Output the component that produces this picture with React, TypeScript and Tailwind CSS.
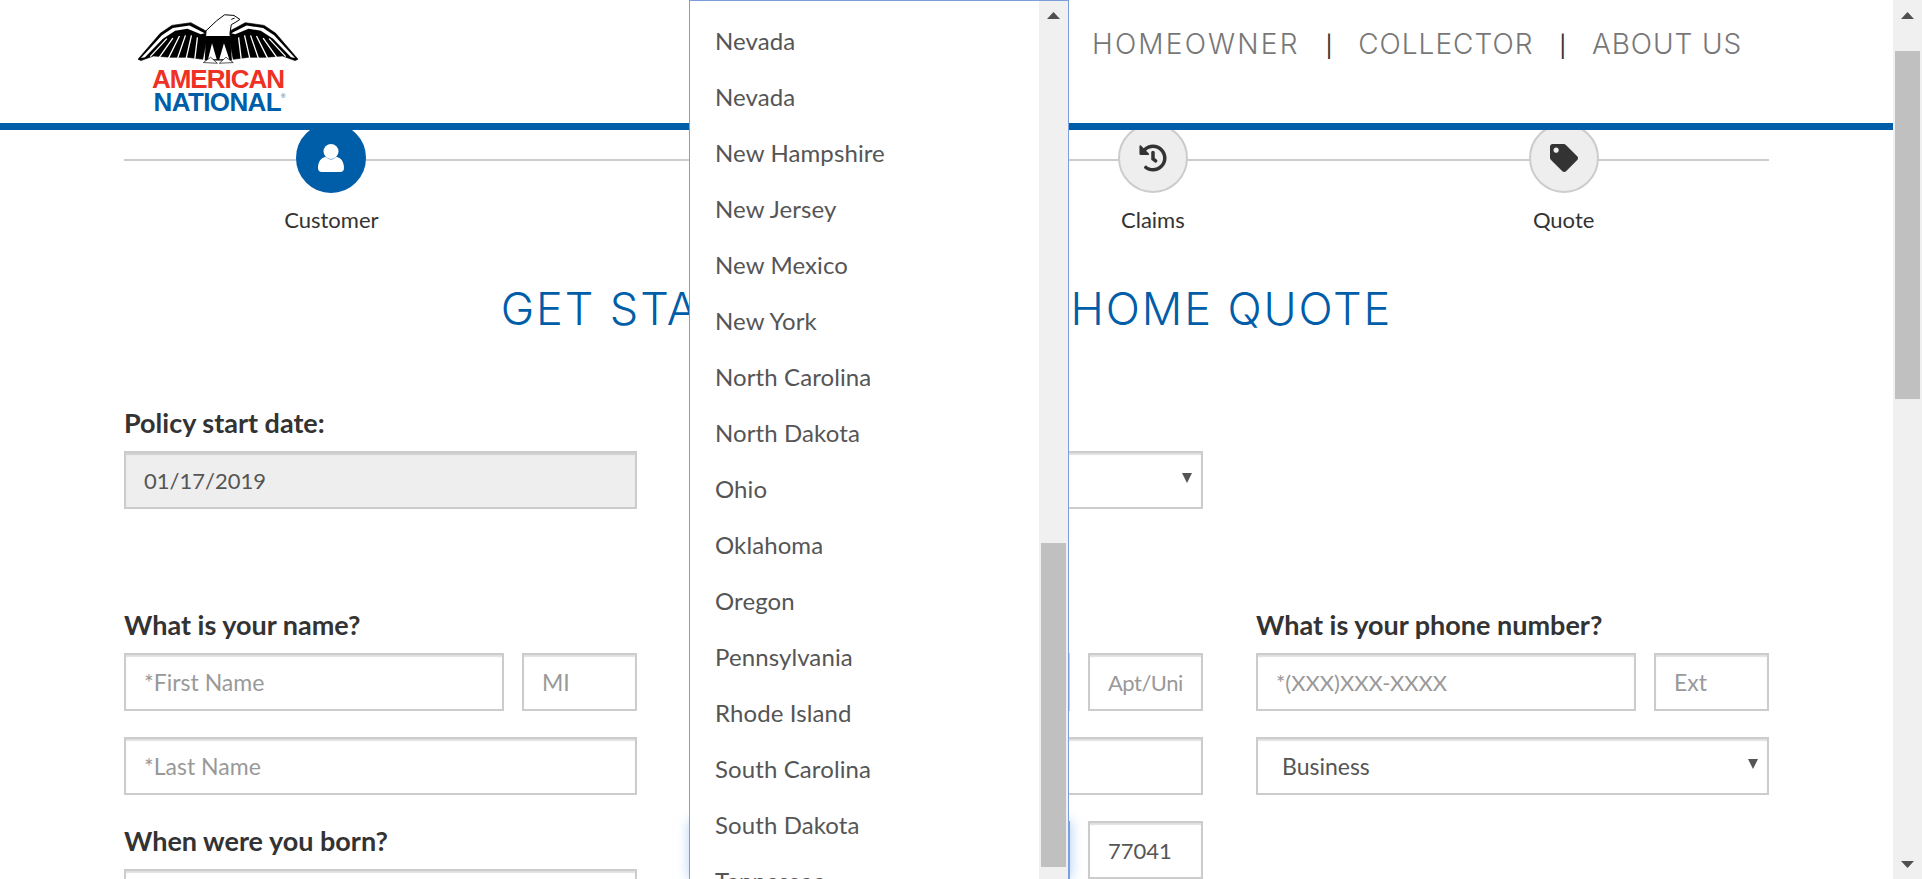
import React from 'react';
import { FaHistory, FaTag, FaHome } from 'react-icons/fa';

const STATES = [
  'Nevada', 'Nevada', 'New Hampshire', 'New Jersey', 'New Mexico', 'New York', 'North Carolina', 'North Dakota',
  'Ohio', 'Oklahoma', 'Oregon', 'Pennsylvania', 'Rhode Island', 'South Carolina', 'South Dakota', 'Tennessee',
];

const BODY_FONT = "font-['Lato',sans-serif]";
const BOX = 'h-[58px] border-2 border-[#ccc] bg-white shadow-[inset_0_2px_1px_rgba(0,0,0,0.12)]';
const INPUT = `${BOX} min-w-0 px-[18px] text-[#555] outline-none placeholder:text-[#999] ${BODY_FONT}`;
const LABEL = 'h-8 text-[27px] leading-8 font-bold text-[#333] mb-[12px]';

const Wing = ({ mirror }: { mirror?: boolean }) => (
  <g transform={mirror ? 'translate(708 0) scale(-1 1)' : undefined}>
    <path d="M113 178 L180 100 L215 76 L272 68 L322 95 L318 130 L308 178 L262 172 L210 172 L160 168 L122 182 Z" fill="#000" stroke="#000" strokeWidth="2" />
    <path d="M122 174 L185 106 L218 84 L268 76 L314 100 L302 103 L262 86 L225 92 L188 116 L134 172 Z" fill="#fff" />
    <path d="M150 170 L200 116 M176 174 L218 114 M204 176 L238 108 M232 176 L256 106 M258 176 L274 106 M284 178 L292 112" stroke="#fff" strokeWidth="4" fill="none" />
  </g>
);

const EagleLogo = () => (
  <div className="flex w-[160px] flex-col items-center pt-[14px]">
    <svg width="160" height="52" viewBox="113 42 482 156">
      <Wing />
      <Wing mirror />
      <path d="M318 92 L350 62 L374 44 L402 46 L420 58 L408 66 L394 74 L390 100 L392 118 L316 118 Z" fill="#fff" stroke="#000" strokeWidth="3" />
      <path d="M318 108 L390 108 L396 182 L314 182 Z" fill="#000" />
      <path d="M336 130 L350 178 L324 178 Z M372 130 L388 178 L358 178 Z" fill="#fff" />
      <path d="M310 188 L332 172 L352 190 Z M358 190 L378 172 L400 188 Z" fill="#fff" stroke="#000" strokeWidth="2" />
      <path d="M404 54 L394 58" stroke="#000" strokeWidth="3" />
    </svg>
    <div className="mt-[2px] flex flex-col items-center font-['Liberation_Sans',Arial,sans-serif] text-[26px] leading-[23px] font-bold tracking-[-1px]">
      <span className="text-[#ee3124]">AMERICAN</span>
      <span className="ml-[3px] tracking-[-0.6px] text-[#005da8]">
        NATIONAL<sup className="align-super text-[6px] font-normal tracking-normal">®</sup>
      </span>
    </div>
  </div>
);

const NavDivider = () => <span className="mx-[26px] font-['Lato',sans-serif] text-[26px] font-normal text-[#333]">|</span>;

const Header = () => (
  <header className="relative z-10 flex h-[130px] items-start justify-between border-b-[7px] border-[#005da8] bg-white pl-[138px] pr-[151px]">
    <EagleLogo />
    <nav className="flex h-[88px] items-center font-['Inter',sans-serif] text-[28px] font-light text-[#777]">
      <a className="tracking-[2.2px]">HOMEOWNER</a>
      <NavDivider />
      <a className="tracking-[1px]">COLLECTOR</a>
      <NavDivider />
      <a className="tracking-[0.9px]">ABOUT US</a>
    </nav>
  </header>
);

const UserIcon = () => (
  <svg width="26" height="28" viewBox="0 0 26 28" fill="currentColor">
    <path d="M0 24 C0 18 3 13 8 13 Q13 18 18 13 C23 13 26 18 26 24 Q26 28 22 28 H4 Q0 28 0 24 Z" />
    <circle cx="13" cy="7.5" r="7.5" />
  </svg>
);

const Step = ({ icon, label, active }: { icon: React.ReactNode; label: string; active?: boolean }) => (
  <div className="relative flex flex-col items-center">
    <div
      className={`flex h-[70px] w-[70px] items-center justify-center rounded-full border-[2px] ${
        active ? 'border-[#005da8] bg-[#005da8] text-white' : 'border-[#ccc] bg-[#eee] text-[#333]'
      }`}
    >
      {icon}
    </div>
    <span className="mt-[13px] text-[22px] leading-7 text-[#333]">{label}</span>
  </div>
);

const Stepper = () => (
  <div className="relative mr-[124px] ml-[126px] -mt-[7px] grid grid-cols-4">
    <div className="absolute -left-[2px] right-0 top-[36px] h-[2px] bg-[#ccc]" />
    <Step icon={<UserIcon />} label="Customer" active />
    <Step icon={<FaHome className="h-[28px] w-[28px]" />} label="Home" />
    <Step icon={<FaHistory className="h-[28px] w-[28px]" />} label="Claims" />
    <Step icon={<FaTag className="h-[28px] w-[28px]" />} label="Quote" />
  </div>
);

const SelectBox = ({ value, className = '' }: { value?: string; className?: string }) => (
  <div className={`${BOX} relative flex items-center pl-[24px] text-[23px] text-[#555] ${className}`}>
    {value}
    <svg className="absolute right-[9px] top-[20px]" width="10" height="10" viewBox="0 0 10 10">
      <path d="M0 0 H10 L5 10 Z" fill="#555" />
    </svg>
  </div>
);

const Form = () => (
  <form className="mx-[124px] mt-[70px] grid grid-cols-3 gap-x-[53px]">
    <div className="flex flex-col">
      <label className={LABEL}>Policy start date:</label>
      <input className={`${INPUT} bg-[#eee]! text-[22px]`} defaultValue="01/17/2019" readOnly />
      <label className={`${LABEL} mt-[100px]`}>What is your name?</label>
      <div className="flex gap-[18px]">
        <input className={`${INPUT} flex-1 text-[23px]`} placeholder="*First Name" />
        <input className={`${INPUT} w-[115px] text-[23px]`} placeholder="MI" />
      </div>
      <input className={`${INPUT} mt-[26px] text-[23px]`} placeholder="*Last Name" />
      <label className={`${LABEL} mt-[30px]`}>When were you born?</label>
      <input className={`${INPUT} text-[22px]`} />
    </div>
    <div className="flex flex-col">
      <label className={LABEL}>Policy type:</label>
      <SelectBox />
      <label className={`${LABEL} mt-[100px]`}>What is your address?</label>
      <div className="flex gap-[18px]">
        <input className={`${INPUT} flex-1`} />
        <input className={`${INPUT} w-[115px] text-[22px] tracking-[-0.5px]`} placeholder="Apt/Unit" />
      </div>
      <input className={`${INPUT} mt-[26px]`} />
      <div className="mt-[26px] flex gap-[18px]">
        <div className="h-[58px] flex-1 border-[3px] border-[#6ea6ee] bg-white shadow-[0_0_12px_rgba(110,166,238,0.6)]" />
        <input className={`${INPUT} w-[115px] text-[22px]`} defaultValue="77041" />
      </div>
    </div>
    <div className="flex flex-col pt-[202px]">
      <label className={LABEL}>What is your phone number?</label>
      <div className="flex gap-[18px]">
        <input className={`${INPUT} flex-1 text-[22px]`} placeholder="*(XXX)XXX-XXXX" />
        <input className={`${INPUT} w-[115px] text-[23px]`} placeholder="Ext" />
      </div>
      <SelectBox value="Business" className="mt-[26px]" />
    </div>
  </form>
);

const ScrollArrow = ({ down }: { down?: boolean }) => (
  <svg className={down ? 'rotate-180' : ''} width="13" height="7" viewBox="0 0 13 7">
    <path d="M0 7 L6.5 0 L13 7 Z" fill="#505050" />
  </svg>
);

const StateDropdown = () => (
  <div className="absolute left-[689px] top-0 z-20 flex h-[879px] w-[380px] overflow-hidden border-x border-t border-[#7a9fdc] bg-white">
    <ul className={`flex-1 pt-[12px] pl-[25px] text-[24px] tracking-[0.1px] text-[#555] ${BODY_FONT}`}>
      {STATES.map((state, i) => (
        <li key={i} className="flex h-[56px] items-center whitespace-nowrap">
          {state}
        </li>
      ))}
    </ul>
    <div className="flex w-[29px] flex-col items-center bg-[#f0f0f0] px-[2px]">
      <div className="flex h-[542px] w-full flex-col items-center pt-[11px]">
        <ScrollArrow />
      </div>
      <div className="h-[324px] w-full bg-[#c0c0c0]" />
    </div>
  </div>
);

export default function App() {
  return (
    <div className={`relative flex h-[879px] overflow-hidden bg-white ${BODY_FONT}`}>
      <main className="h-full flex-1 overflow-hidden">
        <Header />
        <Stepper />
        <h1 className="mt-[47px] text-center font-['Inter',sans-serif] text-[45px] leading-[56px] font-light tracking-[1.9px] text-[#005da8]">
          GET STARTED ON YOUR HOME QUOTE
        </h1>
        <Form />
      </main>
      <StateDropdown />
      <div className="flex h-full w-[29px] flex-col items-center bg-[#f0f0f0] px-[2px]">
        <div className="flex h-[51px] w-full flex-col items-center pt-[12px]">
          <ScrollArrow />
        </div>
        <div className="h-[348px] w-full bg-[#c0c0c0]" />
        <div className="mt-auto pb-[11px]">
          <ScrollArrow down />
        </div>
      </div>
    </div>
  );
}
